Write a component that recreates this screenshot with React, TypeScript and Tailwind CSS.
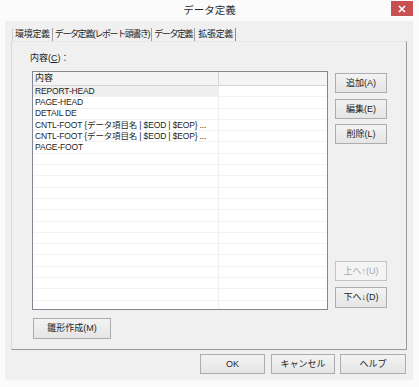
import React from 'react';

const font = { fontFamily: '"Liberation Sans", "Noto Sans CJK JP", sans-serif' };

function Btn({
  label,
  className = '',
  disabled = false,
}: {
  label: string;
  className?: string;
  disabled?: boolean;
}) {
  return (
    <div
      className={`flex items-center justify-center border text-[9px] leading-none ${
        disabled
          ? 'border-[#c4c4c4] bg-[#f4f4f4] text-[#a8a8a8]'
          : 'border-[#adadad] bg-gradient-to-b from-[#f3f3f3] to-[#e5e5e5] text-[#1e1e1e]'
      } ${className}`}
    >
      {label}
    </div>
  );
}

const rows = [
  'REPORT-HEAD',
  'PAGE-HEAD',
  'DETAIL DE',
  'CNTL-FOOT {データ項目名 | $EOD | $EOP} ...',
  'CNTL-FOOT {データ項目名 | $EOD | $EOP} ...',
  'PAGE-FOOT',
];

const tabs = [
  { t: '環境定義', c: 'tracking-[-0.3px]' },
  { t: 'データ定義(レポート頭書き)', c: 'tracking-[-1.4px]' },
  { t: 'データ定義', c: 'tracking-[-1.4px]' },
  { t: '拡張定義', c: 'tracking-[-0.3px]' },
];

export default function App() {
  const cells = Array.from({ length: 20 }, (_, i) => rows[i] ?? '');

  return (
    <div className="w-[419px] h-[387px] bg-[#fbfbfb] text-[#1e1e1e]" style={font}>
      {/* Title bar */}
      <div className="relative h-[21px] flex items-center justify-center">
        <span className="text-[10.5px] text-[#2b2b2b] pt-[1px]">データ定義</span>
        <div className="absolute right-[6px] top-[1px] w-[22px] h-[15px] bg-[#c75050] flex items-center justify-center">
          <svg width="8" height="8" viewBox="0 0 8 8">
            <path d="M1 1 L7 7 M7 1 L1 7" stroke="#fff" strokeWidth="1.6" />
          </svg>
        </div>
      </div>

      {/* Client area */}
      <div className="ml-[5px] mr-[6px] h-[359px] bg-[#f0f0f0] flex flex-col px-[6px] pt-[7px]">
        {/* Tabs */}
        <div className="flex h-[13px] pl-[1px]">
          {tabs.map((tab, i) => (
            <div
              key={tab.t}
              className={`flex items-center px-[2px] text-[9px] leading-none border-r ${tab.c} ${
                i === 0 ? 'border-l border-l-[#d0d0d0]' : ''
              } ${i === 3 ? 'border-r-[#8c8c8c] pl-[3px] pr-[2px]' : 'border-r-[#a0a0a0]'}`}
            >
              {tab.t}
            </div>
          ))}
        </div>

        {/* Panel */}
        <div className="w-[396px] h-[309px] border-l border-t border-l-[#dadada] border-t-[#e6e6e6] border-r border-b border-r-[#9a9a9a] border-b-[#9a9a9a] pl-[20px] pt-[9px] flex flex-col">
          <div className="h-[14px] flex items-center text-[9px] leading-none -ml-[2px]">
            内容(<span className="underline">C</span>)：
          </div>
          <div className="flex mt-[6px]">
            {/* List view */}
            <div className="w-[296px] h-[239px] bg-white border border-[#828790] overflow-hidden">
              <div className="flex h-[14px] border-b border-[#d5d5d5] bg-[#f4f4f4]">
                <div className="w-[186px] border-r border-[#d5d5d5] flex items-center pl-[2px] text-[9px] leading-none">
                  内容
                </div>
                <div className="flex-1" />
              </div>
              {cells.map((r, i) => (
                <div key={i} className="flex h-[11.3px] border-b border-[#f2f2f2]">
                  <div
                    className={`w-[186px] border-r border-[#f0f0f0] flex items-center pl-[2px] text-[8.5px] tracking-[-0.15px] leading-none whitespace-nowrap ${
                      i === 0 ? 'bg-[#efefef]' : ''
                    }`}
                  >
                    {r}
                  </div>
                  <div className="flex-1" />
                </div>
              ))}
            </div>

            {/* Side buttons */}
            <div className="ml-[7px] w-[52px] flex flex-col justify-between pt-[2px] pb-[2px]">
              <div className="flex flex-col">
                <Btn label="追加(A)" className="h-[20px]" />
                <Btn label="編集(E)" className="h-[20px] mt-[6px]" />
                <Btn label="削除(L)" className="h-[20px] mt-[5px]" />
              </div>
              <div className="flex flex-col">
                <Btn label="上へ↑(U)" className="h-[20px]" disabled />
                <Btn label="下へ↓(D)" className="h-[21px] mt-[6px]" />
              </div>
            </div>
          </div>
          <div className="mt-[8px] pl-[1px]">
            <Btn label="雛形作成(M)" className="w-[78px] h-[21px]" />
          </div>
        </div>

        {/* Bottom buttons */}
        <div className="flex justify-end mt-[4px] pr-[1px]">
          <Btn label="OK" className="w-[65px] h-[20px]" />
          <Btn label="キャンセル" className="w-[64px] h-[20px] ml-[6px]" />
          <Btn label="ヘルプ" className="w-[66px] h-[20px] ml-[5px]" />
        </div>
      </div>
    </div>
  );
}
